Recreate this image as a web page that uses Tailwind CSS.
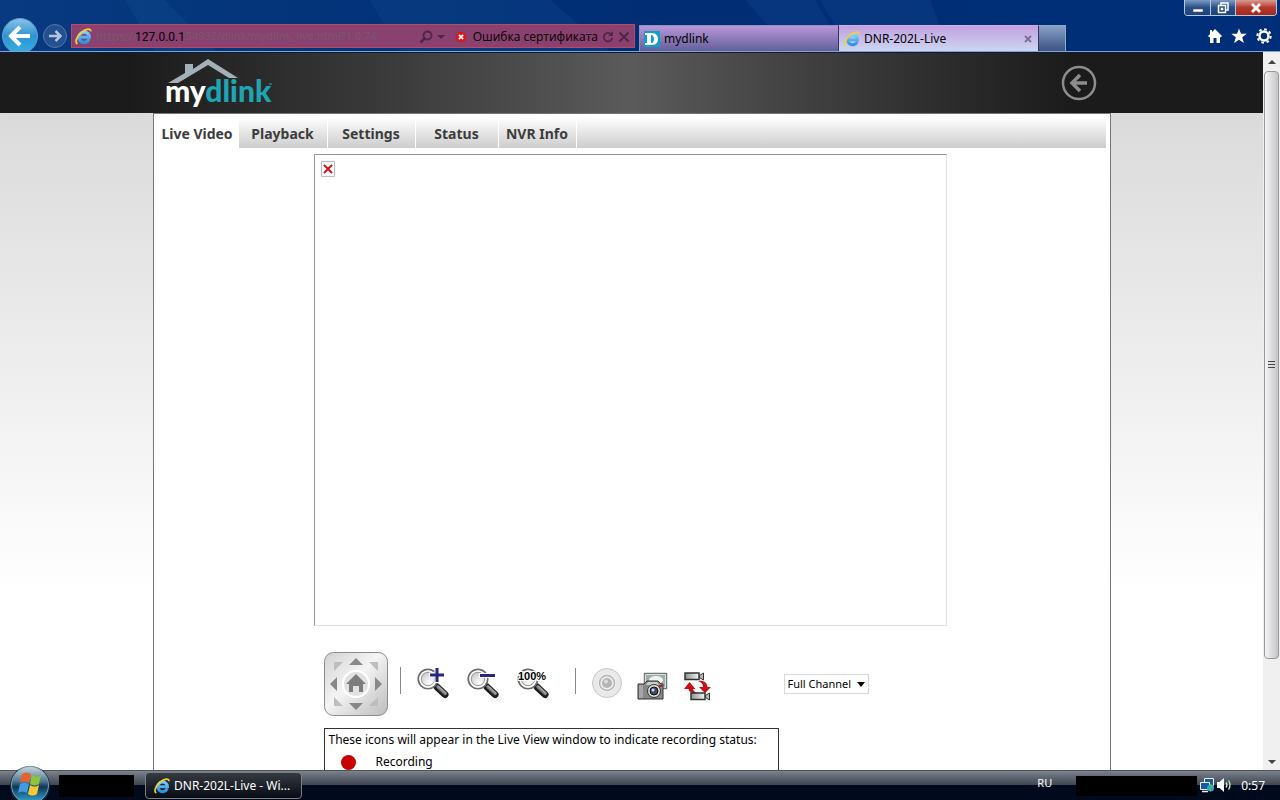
<!DOCTYPE html>
<html lang="en">
<head>
    <meta charset="UTF-8">
    <meta name="viewport" content="width=device-width, initial-scale=1.0">
    <title>DNR-202L-Live</title>
    <script src="https://cdn.jsdelivr.net/npm/@tailwindcss/browser@4"></script>
</head>
<body class="h-screen flex flex-col overflow-hidden bg-white text-xs text-black font-['Noto_Sans','Open_Sans',sans-serif]">

    <!-- shared icons -->
    <svg class="absolute h-0 w-0">
        <defs>
            <linearGradient id="ieBlue" gradientUnits="userSpaceOnUse" x1="0" y1="2" x2="0" y2="14">
                <stop offset="0" stop-color="#8adcfc"/>
                <stop offset="1" stop-color="#2a8fe0"/>
            </linearGradient>
            <linearGradient id="handle" x1="0" y1="1" x2="1" y2="0">
                <stop offset="0" stop-color="#111"/>
                <stop offset=".6" stop-color="#aaa"/>
                <stop offset="1" stop-color="#222"/>
            </linearGradient>
            <radialGradient id="lens" cx=".6" cy=".7" r=".7">
                <stop offset="0" stop-color="#fff"/>
                <stop offset="1" stop-color="#c0c0c0"/>
            </radialGradient>
            <linearGradient id="metal" x1="0" y1="0" x2="1" y2="0">
                <stop offset="0" stop-color="#8c948e"/>
                <stop offset="1" stop-color="#f4f4f4"/>
            </linearGradient>
            <symbol id="ie" viewBox="0 0 16 16">
                <path d="M13.200 10.500A4.900 4.900 0 1 1 13.500 8.700H5" fill="none" stroke="url(#ieBlue)" stroke-width="3"/>
                <path d="M2.300 14.900C-.5 13.500 1.500 8 6 4.200 10.500.4 15 .2 14.900 3.200" fill="none" stroke="#f3d03c" stroke-width="1.700"/>
            </symbol>
            <symbol id="magnifier" viewBox="0 0 32 32">
                <path d="M20 20l8 7.500" stroke="#1c1c1c" stroke-width="7" stroke-linecap="round"/>
                <path d="M21 20l7 6.500" stroke="url(#handle)" stroke-width="3.500" stroke-linecap="round"/>
                <circle cx="11" cy="12" r="9.700" fill="url(#lens)" stroke="#6c6c6c" stroke-width="1.800"/>
                <circle cx="11" cy="12" r="8" fill="none" stroke="#fff" stroke-width="1.500"/>
                <circle cx="11" cy="12" r="6.700" fill="none" stroke="#999" stroke-width="1"/>
            </symbol>
            <symbol id="camcorder" viewBox="0 0 21 9">
                <path d="M1 1h14v6.500H1z" fill="url(#metal)" stroke="#333" stroke-width="1.500"/>
                <path d="M15.500 3.500l4-2.500v7l-4-2.500z" fill="#bbb" stroke="#333"/>
            </symbol>
        </defs>
    </svg>

    <!-- browser chrome -->
    <header class="relative h-[52px] shrink-0 border-b border-[#83a3cf] bg-linear-to-r from-[#073a80] via-[#002d74] to-[#002e78]">
        <svg class="absolute inset-0 w-full h-full" viewBox="0 0 1280 52" preserveAspectRatio="none">
            <path d="M125 0h40l50 52h-60zM370 0h180l60 52H400zM745 0h70l30 52H790zM820 0h110l20 52H850z" fill="#2463a8" opacity=".16"/>
        </svg>
        <div class="absolute top-0 right-[3px] flex h-4 w-[93px] overflow-hidden rounded-b border border-t-0 border-[#b7c7dc]">
            <button aria-label="Minimize" class="flex w-[26px] items-center justify-center border-r border-[#b7c7dc] bg-linear-to-b from-[#7e9cc4] via-[#2a4f88] to-[#1c437c]">
                <svg class="w-3 h-3" viewBox="0 0 12 12"><path d="M1 7h10v3H1z" fill="#fff" stroke="#445" stroke-width=".5"/></svg>
            </button>
            <button aria-label="Restore" class="flex w-[25px] items-center justify-center border-r border-[#b7c7dc] bg-linear-to-b from-[#7e9cc4] via-[#2a4f88] to-[#1c437c]">
                <svg class="w-3 h-3" viewBox="0 0 12 12" fill="none" stroke="#fff" stroke-width="1.500"><path d="M4 3V1h7v7H9M1.500 3.500h7v7h-7zM4.500 6.500h1v1h-1z"/></svg>
            </button>
            <button aria-label="Close" class="flex flex-1 items-center justify-center bg-linear-to-b from-[#d79a94] via-[#b03a2c] to-[#a8281a]">
                <svg class="w-3 h-3" viewBox="0 0 12 12"><path d="M2 2l8 8M10 2l-8 8" stroke="#fff" stroke-width="2.800"/></svg>
            </button>
        </div>

        <div class="relative flex h-full items-end pt-6">
            <button aria-label="Back" class="ml-0.5 h-[34px] w-9 shrink-0">
                <svg class="h-[34px] w-9" viewBox="0 0 36 34">
                    <defs><linearGradient id="backFill" x1="0" y1="0" x2="0" y2="1"><stop offset="0" stop-color="#8bc5e8"/><stop offset=".5" stop-color="#2e93cf"/><stop offset="1" stop-color="#35b0e6"/></linearGradient></defs>
                    <circle cx="18" cy="19" r="17.500" fill="url(#backFill)" stroke="#5c9ccc"/>
                    <path d="M28 19H10M18 10l-9 9 9 9" fill="none" stroke="#fff" stroke-width="4"/>
                </svg>
            </button>
            <button aria-label="Forward" class="ml-[5px] mb-[3px] h-6 w-6 shrink-0">
                <svg class="h-6 w-6" viewBox="0 0 24 24">
                    <circle cx="12" cy="12" r="11.500" fill="#244f90" stroke="#5278ae"/>
                    <path d="M6 12h11M12.500 7l5 5-5 5" fill="none" stroke="#b4c4dc" stroke-width="2.500"/>
                </svg>
            </button>
            <form class="mb-[3px] ml-1 flex h-6 w-[564px] shrink-0 items-center border border-[#b84a68] bg-[#8a4170] pt-px pr-1 pl-[3px] text-[#735a6b]">
                <svg class="h-[17px] w-[17px] shrink-0"><use href="#ie"/></svg>
                <label for="url" class="ml-1 w-[39px]">https://</label>
                <input id="url" type="text" value="127.0.0.1" class="w-12 font-[Roboto,sans-serif] text-black outline-none">
                <span class="text-[11px] whitespace-nowrap">:54932/dlink/mydlink_live.html?1.0.74</span>
                <button type="button" aria-label="Search" class="ml-auto flex w-7 items-center gap-1">
                    <svg class="h-3.5 w-3.5" viewBox="0 0 14 14" fill="none" stroke="#4d2747"><circle cx="8.500" cy="5.500" r="4" stroke-width="2"/><path d="M5.500 8.500L1.500 12.500" stroke-width="2.500"/></svg>
                    <svg class="h-1.5 w-2" viewBox="0 0 8 6"><path d="M0 1h8L4 5z" fill="#4d2747"/></svg>
                </button>
                <button type="button" class="ml-2 flex items-center gap-1.5 text-black whitespace-nowrap font-['Open_Sans',sans-serif]">
                    <svg class="h-3 w-3" viewBox="0 0 14 14"><circle cx="7" cy="7" r="6.500" fill="#cf1c1c"/><path d="M4.500 4.500l5 5M9.500 4.500l-5 5" stroke="#fff" stroke-width="1.800"/></svg>
                    Ошибка сертификата
                </button>
                <button type="button" aria-label="Refresh" class="ml-1">
                    <svg class="h-3 w-3" viewBox="0 0 12 12"><path d="M9.500 3.500A4.300 4.300 0 1 0 10.300 7" fill="none" stroke="#4d2747" stroke-width="1.800"/><path d="M6 5h5V0z" fill="#4d2747"/></svg>
                </button>
                <button type="button" aria-label="Stop" class="ml-1">
                    <svg class="h-3 w-3" viewBox="0 0 12 12"><path d="M1.500 1.500l9 9M10.500 1.500l-9 9" stroke="#4d2747" stroke-width="2"/></svg>
                </button>
            </form>
            <a href="#" class="ml-1 flex h-[26px] w-[200px] shrink-0 items-center gap-1 border-t border-r border-l border-[#8f8fc0] border-r-[#33335c] bg-linear-to-b from-[#b896da] to-[#63609a] pl-1">
                <svg class="h-4 w-4" viewBox="0 0 16 16"><path d="M0 0h16v16H0z" fill="#109fc4"/><path fill-rule="evenodd" d="M1 2h7c8 0 8 12 0 12H1v-2h2V4H1zM7 4v8c4 0 4-8 0-8z" fill="#fff"/></svg>
                mydlink
            </a>
            <div class="flex h-[26px] w-[200px] shrink-0 items-center border-t border-r border-[#c9b3e4] border-r-[#33335c] bg-linear-to-b from-[#c2a0e0] to-[#ccd6f0] pr-1.5 pl-[5px]">
                <svg class="mr-1 h-4 w-4"><use href="#ie"/></svg>
                <a href="#" class="flex-1">DNR-202L-Live</a>
                <button aria-label="Close tab"><svg class="h-2 w-2" viewBox="0 0 8 8"><path d="M1 1l6 6M7 1L1 7" stroke="#81709a" stroke-width="2"/></svg></button>
            </div>
            <button aria-label="New tab" class="h-[26px] w-[27px] shrink-0 border-t border-r border-[#8ea8c8] bg-linear-to-b from-[#89a1c6] to-[#3d5484]"></button>
            <div class="mr-2 mb-[7px] ml-auto flex shrink-0 gap-[9px]">
                <button aria-label="Home"><svg class="h-4 w-3.5" viewBox="0 0 14 16"><path d="M7 1l7 7-1.500 1.500L12 9v6H8.500v-5h-3v5H2V9l-.5.5L0 8l2-2V2h2v2z" fill="#fff"/></svg></button>
                <button aria-label="Favorites"><svg class="h-4 w-4" viewBox="0 0 16 16"><path d="M8 .5l2 5.300h5.700l-4.500 3.500 1.700 5.700L8 11.700 3.100 15l1.700-5.700L.3 5.800H6z" fill="#fff"/></svg></button>
                <button aria-label="Tools"><svg class="h-4 w-4" viewBox="0 0 16 16" fill="none" stroke="#fff"><circle cx="8" cy="8" r="4.500" stroke-width="2.500"/><circle cx="8" cy="8" r="6.700" stroke-width="2" stroke-dasharray="2.600 2.660"/></svg></button>
            </div>
        </div>
    </header>

    <!-- page -->
    <div class="flex min-h-0 flex-1">
        <div class="flex min-w-0 flex-1 flex-col overflow-hidden bg-linear-to-b from-[#d6d6d6] to-white to-75%">
            <div class="shrink-0 border-t border-[#0c1c36] bg-linear-to-r from-[#1b1b1b] from-10% via-[#5b5b5b] via-50% to-[#1b1b1b] to-85%">
                <div class="mx-auto flex h-[60px] w-[958px] items-center justify-between pr-3.5 pl-3">
                    <a href="#" aria-label="mydlink">
                        <svg class="h-[54px] w-[110px]" viewBox="0 0 110 54">
                            <path d="M3 27L20 17V8h8v5L43 3l30 19h-9L43 9 13 27z" fill="#a3b0b8"/>
                            <text x="0" y="46" font-family="Lato" font-weight="900" font-size="30" fill="#fff">my<tspan fill="#1ea5b4">dlink</tspan></text>
                            <path d="M104 28h3" stroke="#1ea5b4"/>
                        </svg>
                    </a>
                    <button aria-label="Back to device list">
                        <svg class="h-9 w-9" viewBox="0 0 36 36" fill="none" stroke="#8d8d8d"><circle cx="18" cy="18" r="16" stroke-width="2.500"/><path d="M26 18H11M19 10l-8 8 8 8" stroke-width="3.500"/></svg>
                    </button>
                </div>
            </div>

            <main class="mx-auto w-[958px] flex-1 border border-b-0 border-[#777] bg-white">
                <nav class="mt-[3px] mr-1 flex h-[31px] bg-linear-to-b from-white to-[#cdcdcd] text-center text-sm leading-[34px] font-bold text-[#3c3c3c] font-['Noto_Sans',sans-serif]">
                    <a href="#" class="w-[85px] bg-white pl-0.5 whitespace-nowrap">Live Video</a>
                    <a href="#" class="w-[89px] border-r border-white">Playback</a>
                    <a href="#" class="w-[88px] border-r border-white">Settings</a>
                    <a href="#" class="w-[83px] border-r border-white">Status</a>
                    <a href="#" class="w-[78px] border-r border-white whitespace-nowrap">NVR Info</a>
                </nav>

                <div class="mt-1.5 ml-40 h-[472px] w-[633px] border border-[#e2e2e2] border-t-[#999] border-l-[#999] p-1.5">
                    <svg class="h-4 w-3.5" viewBox="0 0 14 16"><path d="M.5.5h13v15H.5z" fill="#fff" stroke="#bbb"/><path d="M3 4l8 8M11 4l-8 8" stroke="#d01818" stroke-width="2"/></svg>
                </div>

                <div class="mt-[26px] ml-[170px] flex h-16 items-center">
                    <button aria-label="Pan and tilt">
                        <svg class="h-16 w-16" viewBox="0 0 64 64">
                            <defs><linearGradient id="pad" x1="0" y1="0" x2="1" y2="1"><stop offset="0" stop-color="#d2d2d2"/><stop offset=".45" stop-color="#f4f4f4"/><stop offset="1" stop-color="#bcbcbc"/></linearGradient></defs>
                            <rect x=".5" y=".5" width="63" height="63" rx="9" fill="url(#pad)" stroke="#8c8c8c"/>
                            <circle cx="32" cy="32" r="13" fill="#e2e2e2" stroke="#fff" stroke-width="2"/>
                            <path d="M32 6l7 7H25zM32 58l7-7H25zM6 32l7-7v14zM58 32l-7-7v14z" fill="#888"/>
                            <path d="M10 10h9l-9 9zM54 10h-9l9 9zM10 54h9l-9-9zM54 54h-9l9-9z" fill="#bdbdbd"/>
                            <path d="M32 22l10 10h-3v8h-4v-6h-6v6h-4v-8h-3z" fill="#7d7d7d"/>
                        </svg>
                    </button>
                    <div class="mb-2 ml-3 h-[27px] w-px bg-[#888]"></div>
                    <div class="mb-0.5 ml-4 flex gap-[18px]">
                        <button aria-label="Zoom in">
                            <svg class="h-8 w-8" viewBox="0 0 32 32"><use href="#magnifier"/><path d="M20 0v16M12 8h16" stroke="#fff" stroke-width="5"/><path d="M20 1v14M13 8h14" stroke="#27277f" stroke-width="3"/></svg>
                        </button>
                        <button aria-label="Zoom out">
                            <svg class="h-8 w-8" viewBox="0 0 32 32"><use href="#magnifier"/><path d="M12 8.500h17" stroke="#fff" stroke-width="5"/><path d="M13 8.500h15" stroke="#27277f" stroke-width="3"/></svg>
                        </button>
                        <button aria-label="Zoom 100%">
                            <svg class="h-8 w-8" viewBox="0 0 32 32"><use href="#magnifier"/><text x="1" y="13" font-family="Liberation Sans" font-weight="700" font-size="11" fill="#000" stroke="#fff" stroke-width="2" paint-order="stroke">100%</text></svg>
                        </button>
                    </div>
                    <div class="mb-1.5 ml-[26px] h-[26px] w-px bg-[#888]"></div>
                    <button aria-label="Record" class="mb-0.5 ml-4">
                        <svg class="h-[30px] w-[30px]" viewBox="0 0 30 30"><circle cx="15" cy="15" r="14.500" fill="#e9e9e9" stroke="#c6c6c6"/><circle cx="15" cy="15" r="9" fill="#f5f5f5"/><circle cx="15" cy="15" r="7.500" fill="#eee" stroke="#b4b4b4" stroke-width="1.500"/><circle cx="15" cy="15" r="5" fill="#b5b5b5"/><circle cx="14" cy="13.500" r="2" fill="#ddd"/></svg>
                    </button>
                    <button aria-label="Snapshot" class="mt-1 ml-[15px]">
                        <svg class="h-7 w-[31px]" viewBox="0 0 31 28">
                            <path d="M7.500 1.500h22v15h-22z" fill="#fff" stroke="#777" stroke-width="1.500"/>
                            <path d="M9 3h19v12H9z" fill="#9db0a8"/><ellipse cx="19" cy="8" rx="7" ry="4" fill="#eef2f0"/>
                            <path d="M1 12h6l3-3h11l3 3h2v15H1z" fill="#888" stroke="#333"/>
                            <path d="M3 13v13M5 13v13" stroke="#c4c4c4"/><path d="M11 10h9l2 3H9z" fill="#ccc"/>
                            <circle cx="17" cy="19" r="6.500" fill="#ddd" stroke="#333"/><circle cx="17" cy="19" r="4" fill="#454a62" stroke="#111"/><circle cx="16" cy="18" r="1.500" fill="#cfd8f4"/>
                            <path d="M22 13h3v2h-3z" fill="#b52020"/>
                        </svg>
                    </button>
                    <button aria-label="Switch camera" class="mt-1.5 ml-4">
                        <svg class="h-[30px] w-7" viewBox="0 0 28 30">
                            <path d="M0 17l5.500-7 6 7H9c0 2 2 3 5 4-6 1-9-1-9.500-4z" fill="#c80e16"/>
                            <path d="M14 9c6-1 9 2 9.500 6H27l-6 6-6-6h4c0-3-1-4-5-6z" fill="#c80e16"/>
                            <use href="#camcorder" x="0" y="0" width="21" height="9"/>
                            <use href="#camcorder" x="6" y="20" width="21" height="9"/>
                        </svg>
                    </button>
                    <div class="relative ml-[72px]">
                        <select aria-label="Channel" class="block h-5 w-[85px] appearance-none border border-[#d8d8d8] bg-white pl-[3px] text-[11px] leading-4">
                            <option>Full Channel</option>
                        </select>
                        <svg class="pointer-events-none absolute top-2 right-1 h-[5px] w-2" viewBox="0 0 8 5"><path d="M0 0h8L4 5z"/></svg>
                    </div>
                </div>

                <div class="mt-3 ml-[170px] h-40 w-[455px] border border-[#333] px-1 pt-0.5 text-xs font-['Noto_Sans',sans-serif]">
                    <p class="leading-[18px] whitespace-nowrap">These icons will appear in the Live View window to indicate recording status:</p>
                    <div class="mt-[3px] flex h-5 items-center gap-5 pl-3">
                        <span class="h-[15px] w-[15px] rounded-full bg-[#c80000]"></span>
                        <p>Recording</p>
                    </div>
                </div>
            </main>
        </div>

        <!-- scrollbar -->
        <div class="flex w-[17px] shrink-0 flex-col items-center bg-[#f0f0f0]">
            <button aria-label="Scroll up" class="flex h-[19px] w-full items-center justify-center"><svg class="h-1 w-2" viewBox="0 0 8 4"><path d="M4 0l4 4H0z" fill="#444"/></svg></button>
            <div class="flex h-[588px] w-[15px] items-center justify-center rounded-sm border border-[#979797] bg-linear-to-r from-[#f5f5f5] to-[#c4c5c9]">
                <svg class="h-2 w-2" viewBox="0 0 8 8"><path d="M0 .5h7M0 3.500h7M0 6.500h7" stroke="#444"/></svg>
            </div>
            <button aria-label="Scroll down" class="mt-auto flex h-[17px] w-full items-center justify-center"><svg class="h-1 w-2" viewBox="0 0 8 4"><path d="M0 0h8L4 4z" fill="#444"/></svg></button>
        </div>
    </div>

    <!-- taskbar -->
    <footer class="relative flex h-[30px] shrink-0 items-center border-t border-[#4c545c] bg-linear-to-b from-[#7c828c] via-[#3d444f] via-50% to-[#000a1c] to-50% text-white">
        <button aria-label="Start" class="absolute bottom-0 left-2 h-[34px] w-11">
            <svg class="h-[34px] w-11" viewBox="0 0 44 34">
                <defs><linearGradient id="orb" x1="0" y1="0" x2="0" y2="1"><stop offset="0" stop-color="#c7d8e2"/><stop offset=".4" stop-color="#52788f"/><stop offset=".55" stop-color="#0d3657"/><stop offset="1" stop-color="#38b0dc"/></linearGradient></defs>
                <circle cx="22" cy="20" r="20" fill="#10283c"/>
                <circle cx="22" cy="19" r="18.500" fill="url(#orb)" stroke="#7fa0b4"/>
                <path d="M14 8c3-2 6-2 9 0l-2 9c-3-2-6-2-9 0z" fill="#e8602c"/>
                <path d="M24 9c3 2 6 2 9 0l-2 9c-3 2-6 2-9 0z" fill="#8cc43c"/>
                <path d="M12 18c3-2 6-2 9 0l-2 9c-3-2-6-2-9 0z" fill="#3f9be4"/>
                <path d="M22 19c3 2 6 2 9 0l-2 9c-3 2-6 2-9 0z" fill="#fbc832"/>
            </svg>
        </button>
        <div class="ml-[59px] h-[22px] w-[75px] bg-black"></div>
        <button class="ml-[11px] flex h-[27px] w-[157px] items-center gap-1 rounded-sm border border-[#7b8087] bg-linear-to-b from-[#363b42] to-[#080c14] pl-2 whitespace-nowrap">
            <svg class="h-4 w-4"><use href="#ie"/></svg>
            DNR-202L-Live - Wi...
        </button>
        <span class="mb-1 ml-auto text-[11px]">RU</span>
        <div class="ml-6 h-5 w-[121px] bg-black"></div>
        <svg class="mb-0.5 ml-0.5 h-4 w-4" viewBox="0 0 16 16"><path d="M5.500 1.500h9v7h-9z" fill="#155c9e" stroke="#eee"/><path d="M1.500 5.500h9v7h-9z" fill="#155c9e" stroke="#eee"/><path d="M3 14.500h6" stroke="#eee" stroke-width="1.500"/><circle cx="11.500" cy="11" r="3.500" fill="#2e9de0"/><path d="M10 9c3-2 4 1 2 2s-1 2 0 3" fill="none" stroke="#50c050" stroke-width="1.500"/></svg>
        <svg class="mb-0.5 ml-0.5 h-4 w-4" viewBox="0 0 16 16"><path d="M0 5h2.500L7 1v14l-4.500-4H0z" fill="#fff"/><path d="M9 5.500q2 2.500 0 5M11.500 3.500q3 4.500 0 9" fill="none" stroke="#c8ecc8" stroke-width="1.300"/></svg>
        <time class="mr-[15px] ml-2">0:57</time>
    </footer>

</body>
</html>
